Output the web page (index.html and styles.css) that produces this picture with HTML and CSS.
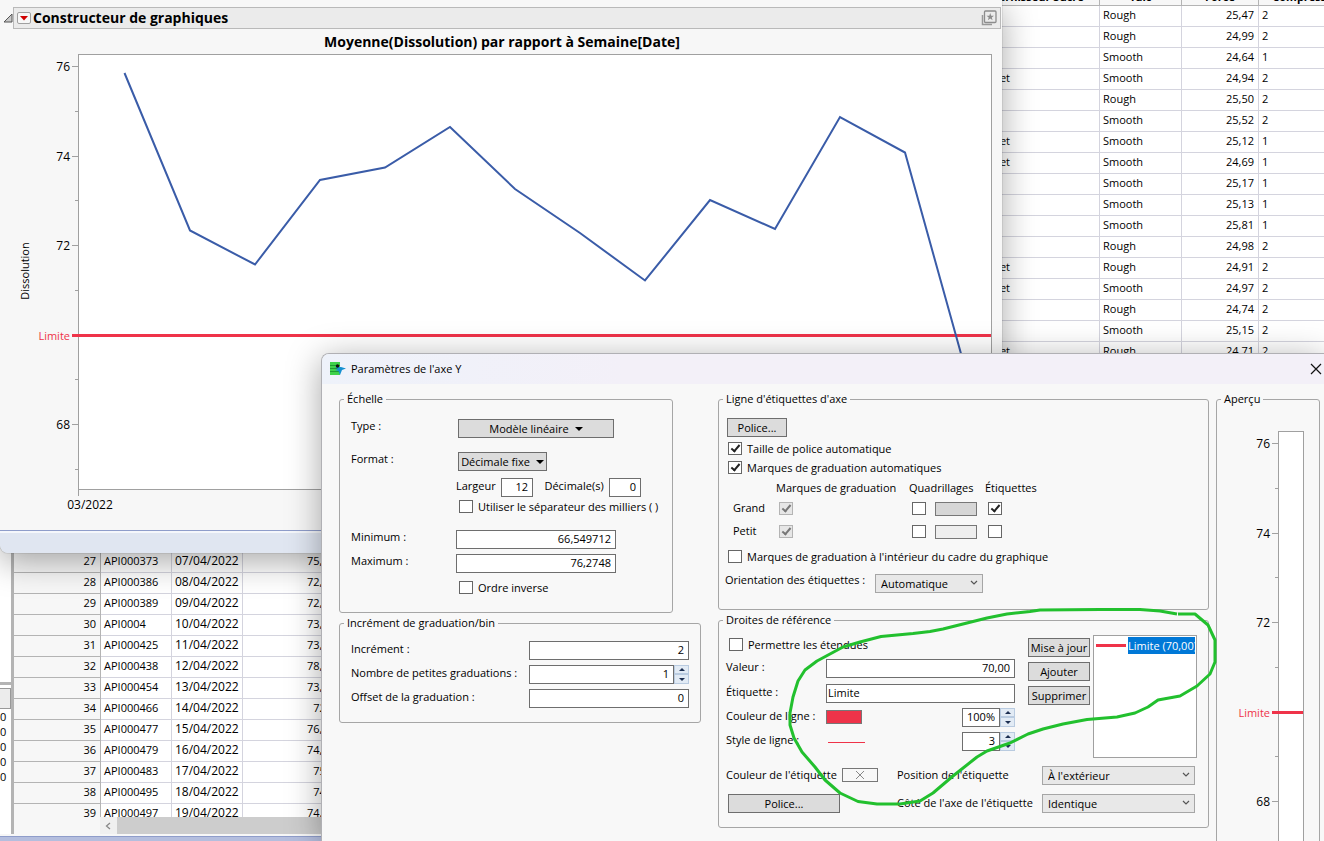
FILE: index.html
```html
<!DOCTYPE html>
<html lang="fr">
<head>
    <meta charset="UTF-8">
    <meta name="viewport" content="width=device-width, initial-scale=1.0">
    <title>Constructeur de graphiques</title>
    <link rel="stylesheet" href="styles.css">
</head>
<body>
    <!-- Table de données en arrière-plan -->
    <main class="data-window">
        <div class="data-main">
            <div class="side">
                <div class="side-top"></div>
                <div class="side-head"></div>
                <div>0</div>
                <div>0</div>
                <div>0</div>
                <div>0</div>
                <div>0</div>
            </div>
            <div class="data-area">
                <div class="data-clip">
                    <table>
                        <colgroup>
                            <col class="c-num"><col class="c-lot"><col class="c-lot"><col class="c-diss"><col class="c-hidden"><col class="c-supplier"><col class="c-size"><col class="c-force"><col>
                        </colgroup>
                        <thead>
                            <tr><th></th><th></th><th></th><th></th><th></th><th>Fournisseur Sucre</th><th>Talc</th><th>Force</th><th class="last">Compression</th></tr>
                        </thead>
                        <tbody>
                            <tr><th></th><td></td><td></td><td></td><td></td><td></td><td>Rough</td><td class="n">25,47</td><td>2</td></tr>
                            <tr><th></th><td></td><td></td><td></td><td></td><td></td><td>Rough</td><td class="n">24,99</td><td>2</td></tr>
                            <tr><th></th><td></td><td></td><td></td><td></td><td></td><td>Smooth</td><td class="n">24,64</td><td>1</td></tr>
                            <tr><th></th><td></td><td></td><td></td><td></td><td>Sweeet</td><td>Smooth</td><td class="n">24,94</td><td>2</td></tr>
                            <tr><th></th><td></td><td></td><td></td><td></td><td></td><td>Rough</td><td class="n">25,50</td><td>2</td></tr>
                            <tr><th></th><td></td><td></td><td></td><td></td><td></td><td>Smooth</td><td class="n">25,52</td><td>2</td></tr>
                            <tr><th></th><td></td><td></td><td></td><td></td><td>Sweeet</td><td>Smooth</td><td class="n">25,12</td><td>1</td></tr>
                            <tr><th></th><td></td><td></td><td></td><td></td><td>Sweeet</td><td>Smooth</td><td class="n">24,69</td><td>1</td></tr>
                            <tr><th></th><td></td><td></td><td></td><td></td><td></td><td>Smooth</td><td class="n">25,17</td><td>1</td></tr>
                            <tr><th></th><td></td><td></td><td></td><td></td><td></td><td>Smooth</td><td class="n">25,13</td><td>1</td></tr>
                            <tr><th></th><td></td><td></td><td></td><td></td><td></td><td>Smooth</td><td class="n">25,81</td><td>1</td></tr>
                            <tr><th></th><td></td><td></td><td></td><td></td><td></td><td>Rough</td><td class="n">24,98</td><td>2</td></tr>
                            <tr><th></th><td></td><td></td><td></td><td></td><td>Sweeet</td><td>Rough</td><td class="n">24,91</td><td>2</td></tr>
                            <tr><th></th><td></td><td></td><td></td><td></td><td>Sweeet</td><td>Smooth</td><td class="n">24,97</td><td>2</td></tr>
                            <tr><th></th><td></td><td></td><td></td><td></td><td></td><td>Rough</td><td class="n">24,74</td><td>2</td></tr>
                            <tr><th></th><td></td><td></td><td></td><td></td><td></td><td>Smooth</td><td class="n">25,15</td><td>2</td></tr>
                            <tr><th></th><td></td><td></td><td></td><td></td><td>Sweeet</td><td>Rough</td><td class="n">24,71</td><td>2</td></tr>
                            <tr><th></th><td></td><td></td><td></td><td></td><td></td><td></td><td></td><td></td></tr>
                            <tr><th></th><td></td><td></td><td></td><td></td><td></td><td></td><td></td><td></td></tr>
                            <tr><th></th><td></td><td></td><td></td><td></td><td></td><td></td><td></td><td></td></tr>
                            <tr><th></th><td></td><td></td><td></td><td></td><td></td><td></td><td></td><td></td></tr>
                            <tr><th></th><td></td><td></td><td></td><td></td><td></td><td></td><td></td><td></td></tr>
                            <tr><th></th><td></td><td></td><td></td><td></td><td></td><td></td><td></td><td></td></tr>
                            <tr><th></th><td></td><td></td><td></td><td></td><td></td><td></td><td></td><td></td></tr>
                            <tr><th></th><td></td><td></td><td></td><td></td><td></td><td></td><td></td><td></td></tr>
                            <tr><th></th><td></td><td></td><td></td><td></td><td></td><td></td><td></td><td></td></tr>
                            <tr><th>27</th><td>API000373</td><td class="date">07/04/2022</td><td class="n">75,21</td><td></td><td></td><td></td><td></td><td></td></tr>
                            <tr><th>28</th><td>API000386</td><td class="date">08/04/2022</td><td class="n">72,93</td><td></td><td></td><td></td><td></td><td></td></tr>
                            <tr><th>29</th><td>API000389</td><td class="date">09/04/2022</td><td class="n">72,42</td><td></td><td></td><td></td><td></td><td></td></tr>
                            <tr><th>30</th><td>API0004</td><td class="date">10/04/2022</td><td class="n">73,75</td><td></td><td></td><td></td><td></td><td></td></tr>
                            <tr><th>31</th><td>API000425</td><td class="date">11/04/2022</td><td class="n">73,41</td><td></td><td></td><td></td><td></td><td></td></tr>
                            <tr><th>32</th><td>API000438</td><td class="date">12/04/2022</td><td class="n">78,14</td><td></td><td></td><td></td><td></td><td></td></tr>
                            <tr><th>33</th><td>API000454</td><td class="date">13/04/2022</td><td class="n">73,46</td><td></td><td></td><td></td><td></td><td></td></tr>
                            <tr><th>34</th><td>API000466</td><td class="date">14/04/2022</td><td class="n">72,5</td><td></td><td></td><td></td><td></td><td></td></tr>
                            <tr><th>35</th><td>API000477</td><td class="date">15/04/2022</td><td class="n">76,62</td><td></td><td></td><td></td><td></td><td></td></tr>
                            <tr><th>36</th><td>API000479</td><td class="date">16/04/2022</td><td class="n">74,63</td><td></td><td></td><td></td><td></td><td></td></tr>
                            <tr><th>37</th><td>API000483</td><td class="date">17/04/2022</td><td class="n">75,1</td><td></td><td></td><td></td><td></td><td></td></tr>
                            <tr><th>38</th><td>API000495</td><td class="date">18/04/2022</td><td class="n">74,3</td><td></td><td></td><td></td><td></td><td></td></tr>
                            <tr><th>39</th><td>API000497</td><td class="date">19/04/2022</td><td class="n">74,03</td><td></td><td></td><td></td><td></td><td></td></tr>
                        </tbody>
                    </table>
                </div>
                <div class="scrollbar">
                    <button type="button" aria-label="Défiler à gauche">
                        <svg width="6" height="8" viewBox="0 0 6 8"><path d="M5 1 L1.5 4 L5 7" fill="none" stroke="#888" stroke-width="1.3"/></svg>
                    </button>
                </div>
            </div>
        </div>
        <div class="data-status"></div>
    </main>

    <!-- Fenêtre du graphique -->
    <section class="graph-window">
        <div class="outline">
            <svg class="disclose" width="10" height="10" viewBox="0 0 10 10"><path d="M9 1 V9 H1 Z" fill="#c8c8c8" stroke="#555" stroke-width="1"/></svg>
            <div class="outline-bar">
                <button type="button" class="red-menu" aria-label="Menu">
                    <svg width="8" height="5" viewBox="0 0 8 5"><path d="M0 0 H8 L4 4.5 Z" fill="#d00000"/></svg>
                </button>
                <h1>Constructeur de graphiques</h1>
                <svg width="16" height="16" viewBox="0 0 16 16">
                    <path d="M1.5 5 V14.5 H11" fill="none" stroke="#999" stroke-width="1.500"/>
                    <rect x="3.5" y="1" width="11.5" height="11.5" rx="1" fill="none" stroke="#8c8c8c" stroke-width="1.3"/>
                    <path d="M9.2 3 L10.2 5.7 L13 5.8 L10.8 7.5 L11.6 10.2 L9.2 8.6 L6.9 10.2 L7.7 7.5 L5.5 5.8 L8.3 5.7 Z" fill="#8c8c8c"/>
                </svg>
            </div>
        </div>
        <svg class="graph" width="1001" height="501" viewBox="0 29 1001 501">
            <text x="502" y="47" class="g-title">Moyenne(Dissolution) par rapport à Semaine[Date]</text>
            <rect x="78.5" y="54.5" width="913" height="435" fill="#fff" stroke="#a0a0a0"/>
            <path d="M72 66.5H78 M72 156.5H78 M72 245.5H78 M72 424.5H78 M75 111.5H78 M75 200.5H78 M75 290.5H78 M75 379.5H78 M75 469.5H78 M78.5 489V496" stroke="#a0a0a0"/>
            <g class="g-axis">
                <text x="70" y="71">76</text>
                <text x="70" y="161">74</text>
                <text x="70" y="250">72</text>
                <text x="70" y="340" class="g-limit">Limite</text>
                <text x="70" y="429">68</text>
            </g>
            <text x="90" y="509" class="g-date">03/2022</text>
            <text transform="translate(29 271) rotate(-90)" class="g-label">Dissolution</text>
            <path d="M72 335.5H991" stroke="#ef3349" stroke-width="3"/>
            <path d="M124.500 73 L190 230.500 L255 264.500 L320 180 L385 167.500 L450 127 L515 189 L580 233 L645 280.500 L710 200 L775 229 L840 117 L905 152.500 L970 386" fill="none" stroke="#3a5ca8" stroke-width="2"/>
        </svg>
        <div class="graph-status"></div>
    </section>

    <!-- Boîte de dialogue -->
    <section class="dialog">
        <header class="dialog-head">
            <svg width="16" height="14" viewBox="0 0 16 14">
                <rect x="0" y="0" width="10" height="13" fill="#3fd24a"/>
                <path d="M0 3.500H10 M0 6.500H10 M0 9.500H10" stroke="#1f9a34"/>
                <path d="M5 5 L11 5 L16 6.500 L12 8 L10 13 L8.500 9 L5 8 L8 7 Z" fill="#1590d0"/>
                <circle cx="7.500" cy="4" r="1.700" fill="#111"/>
            </svg>
            <h2>Paramètres de l'axe Y</h2>
            <button type="button" class="close" aria-label="Fermer">
                <svg width="12" height="12" viewBox="0 0 12 12"><path d="M1 1 L11 11 M11 1 L1 11" stroke="#111" stroke-width="1.200"/></svg>
            </button>
        </header>
        <div class="dialog-body">
            <div class="col-left">
                <fieldset class="scale">
                    <legend>Échelle</legend>
                    <div class="scale-grid">
                        <label for="type">Type :</label>
                        <button type="button" id="type" class="btn menu wide">Modèle linéaire <i></i></button>
                        <label for="format">Format :</label>
                        <button type="button" id="format" class="btn menu">Décimale fixe <i></i></button>
                        <div class="format-row">
                            <label for="largeur">Largeur</label><input type="text" class="tiny" id="largeur" value="12">
                            <label for="decimales">Décimale(s)</label><input type="text" class="tiny" id="decimales" value="0">
                        </div>
                        <label class="check"><input type="checkbox">Utiliser le séparateur des milliers ( )</label>
                        <label for="min">Minimum :</label>
                        <input type="text" id="min" value="66,549712">
                        <label for="max">Maximum :</label>
                        <input type="text" id="max" value="76,2748">
                        <label class="check"><input type="checkbox">Ordre inverse</label>
                    </div>
                </fieldset>
                <fieldset class="step">
                    <legend>Incrément de graduation/bin</legend>
                    <div class="step-grid">
                        <label for="inc">Incrément :</label>
                        <input type="text" id="inc" value="2">
                        <label for="petites">Nombre de petites graduations :</label>
                        <div class="spin">
                            <input type="text" id="petites" value="1">
                            <span><button type="button" class="up" aria-label="Plus"></button><button type="button" class="down" aria-label="Moins"></button></span>
                        </div>
                        <label for="offset">Offset de la graduation :</label>
                        <input type="text" id="offset" value="0">
                    </div>
                </fieldset>
            </div>

            <div class="col-mid">
                <fieldset class="labels">
                    <legend>Ligne d'étiquettes d'axe</legend>
                    <button type="button" class="btn">Police...</button>
                    <label class="check"><input type="checkbox" checked>Taille de police automatique</label>
                    <label class="check"><input type="checkbox" checked>Marques de graduation automatiques</label>
                    <div class="marks">
                        <span></span><span>Marques de graduation</span><span>Quadrillages</span><span>Étiquettes</span>
                        <span>Grand</span>
                        <div><input type="checkbox" checked disabled aria-label="Grand, marques"></div>
                        <div><input type="checkbox" aria-label="Grand, quadrillages"><button type="button" class="swatch grey" aria-label="Couleur"></button></div>
                        <div><input type="checkbox" checked aria-label="Grand, étiquettes"></div>
                        <span>Petit</span>
                        <div><input type="checkbox" checked disabled aria-label="Petit, marques"></div>
                        <div><input type="checkbox" aria-label="Petit, quadrillages"><button type="button" class="swatch light" aria-label="Couleur"></button></div>
                        <div><input type="checkbox" aria-label="Petit, étiquettes"></div>
                    </div>
                    <label class="check"><input type="checkbox">Marques de graduation à l'intérieur du cadre du graphique</label>
                    <div class="orient">
                        <label for="orient">Orientation des étiquettes :</label>
                        <div class="select">
                            <select id="orient"><option>Automatique</option></select>
                            <svg width="8" height="6" viewBox="0 0 8 6"><path d="M1 1 L4 4 L7 1" fill="none" stroke="#555" stroke-width="1.200"/></svg>
                        </div>
                    </div>
                </fieldset>
                <fieldset class="refs">
                    <legend>Droites de référence</legend>
                    <div class="refs-top">
                        <div class="refs-form">
                            <label class="check"><input type="checkbox">Permettre les étendues</label>
                            <label for="valeur">Valeur :</label>
                            <input type="text" id="valeur" value="70,00">
                            <label for="etiquette">Étiquette :</label>
                            <input type="text" id="etiquette" class="left" value="Limite">
                            <label for="couleur">Couleur de ligne :</label>
                            <div class="line-row">
                                <button type="button" id="couleur" class="swatch red"></button>
                                <div class="spin">
                                    <input type="text" value="100%" aria-label="Opacité">
                                    <span><button type="button" class="up" aria-label="Plus"></button><button type="button" class="down" aria-label="Moins"></button></span>
                                </div>
                            </div>
                            <label for="style">Style de ligne :</label>
                            <div class="line-row">
                                <button type="button" id="style" class="line-style"></button>
                                <div class="spin">
                                    <input type="text" value="3" aria-label="Épaisseur">
                                    <span><button type="button" class="up" aria-label="Plus"></button><button type="button" class="down" aria-label="Moins"></button></span>
                                </div>
                            </div>
                        </div>
                        <div class="refs-buttons">
                            <button type="button" class="btn">Mise à jour</button>
                            <button type="button" class="btn">Ajouter</button>
                            <button type="button" class="btn">Supprimer</button>
                        </div>
                        <div class="refs-list">
                            <div class="item"><i></i><span>Limite (70,00)</span></div>
                        </div>
                    </div>
                    <div class="refs-bottom">
                        <div class="label-color">
                            <label for="couleur-etiq">Couleur de l'étiquette</label>
                            <button type="button" id="couleur-etiq" class="swatch none"><svg width="10" height="10" viewBox="0 0 10 10"><path d="M1 1 L9 9 M9 1 L1 9" stroke="#888"/></svg></button>
                        </div>
                        <label for="position">Position de l'étiquette</label>
                        <div class="select">
                            <select id="position"><option>À l'extérieur</option></select>
                            <svg width="8" height="6" viewBox="0 0 8 6"><path d="M1 1 L4 4 L7 1" fill="none" stroke="#555" stroke-width="1.200"/></svg>
                        </div>
                        <button type="button" class="btn">Police...</button>
                        <label for="cote">Côté de l'axe de l'étiquette</label>
                        <div class="select">
                            <select id="cote"><option>Identique</option></select>
                            <svg width="8" height="6" viewBox="0 0 8 6"><path d="M1 1 L4 4 L7 1" fill="none" stroke="#555" stroke-width="1.200"/></svg>
                        </div>
                    </div>
                </fieldset>
            </div>

            <fieldset class="preview">
                <legend>Aperçu</legend>
                <svg width="102" height="434" viewBox="1217 407 102 434">
                    <rect x="1278.500" y="431.500" width="25" height="430" fill="#fff" stroke="#a0a0a0"/>
                    <path d="M1272 443.500H1278 M1272 533.500H1278 M1272 622.500H1278 M1272 801.500H1278 M1275 488.500H1278 M1275 577.500H1278 M1275 667.500H1278 M1275 756.500H1278" stroke="#a0a0a0"/>
                    <path d="M1272 712.500H1303" stroke="#ef3349" stroke-width="3"/>
                    <g class="g-axis">
                        <text x="1270" y="448">76</text>
                        <text x="1270" y="538">74</text>
                        <text x="1270" y="627">72</text>
                        <text x="1270" y="717" class="g-limit">Limite</text>
                        <text x="1270" y="806">68</text>
                    </g>
                </svg>
            </fieldset>
        </div>

        <!-- Annotation à main levée -->
        <svg class="scribble" width="1002" height="487" viewBox="322 354 1002 487">
            <path d="M1177 614 L1160 611 L1140 609.500 L1100 609.500 L1040 610 L1030 611.500 L1007 614 L987 618 L967 623 L943 629 L930 631.500 L913 633.500 L881 636.500 L860 642 L843 647 L817 661 L805 670 L798 681 L793 697 L790 713 L790 725 L794 738 L802 752 L815 767 L825 780 L840 793 L858 801.500 L877 804 L900 804 L920 801 L933 793 L953 776 L977 757 L987 751 L1010 743 L1028 734 L1043 729 L1063 724 L1087 719.500 L1117 717 L1135 713 L1148 707 L1158 700 L1180 696 L1197 686 L1210 674 L1215 662 L1215 640 L1208 625 L1195 614 L1178 614"/>
        </svg>
    </section>
</body>
</html>
```
FILE: styles.css
```css
body {
    margin: 0;
    height: 100vh;
    position: relative;
    overflow: hidden;
    background-color: #f7f7f7;
    font-family: "Open Sans", "Noto Sans", sans-serif;
    font-size: 11px;
    line-height: 14px;
    color: #000;
}

button, input, select {
    font: inherit;
    color: inherit;
    margin: 0;
    box-sizing: border-box;
    border-radius: 0;
}

svg {
    display: block;
}

/* Table de données */
.data-window {
    height: 100%;
    display: flex;
    flex-direction: column;
}

.data-main {
    flex: 1;
    min-height: 0;
    display: flex;
}

.side {
    width: 11px;
    background-color: #fff;
    border-right: 3px solid #b4b4b4;
    line-height: 15px;
    overflow: hidden;
}

.side-top {
    height: 682px;
    border-bottom: 3px solid #b4b4b4;
    background-color: #fff;
}

.side-head {
    height: 19px;
    margin: 3px 0 0;
    border: 1px solid #999;
    border-left: 0;
    background-color: #ececec;
}

.data-area {
    flex: 1;
    min-width: 0;
    display: flex;
    flex-direction: column;
}

.data-clip {
    flex: 1;
    min-height: 0;
    overflow: hidden;
}

table {
    width: calc(100% + 34px);
    margin-top: -16px;
    table-layout: fixed;
    border-collapse: separate;
    border-spacing: 0;
    background-color: #fff;
}

.c-num { width: 87px; }
.c-lot { width: 71px; }
.c-diss { width: 97px; }
.c-hidden { width: 630px; }
.c-supplier { width: 130px; }
.c-size { width: 82px; }
.c-force { width: 77px; }

th, td {
    box-sizing: border-box;
    height: 21px;
    padding: 0 3px 2px;
    border-right: 1px solid #d4d4de;
    border-bottom: 1px solid #d4d4de;
    text-align: left;
    font-weight: normal;
    white-space: nowrap;
}

thead th {
    height: 22px;
    padding: 4px 3px 0;
    background-color: #f7f7f7;
    border-color: #b4b4b4;
    font-weight: bold;
    text-align: center;
}

tbody th {
    background-color: #f7f7f7;
    border-color: #b4b4b4;
    text-align: right;
    padding-right: 4px;
}

.n {
    text-align: right;
    padding-right: 4px;
}

.date {
    font-size: 12px;
}

.scrollbar {
    height: 17px;
    margin-left: 86px;
    background-color: #cdcdcd;
}

.scrollbar button {
    width: 17px;
    height: 17px;
    padding: 0 5px;
    border: 0;
    background-color: #f0f0f0;
}

.data-status {
    height: 4px;
    margin-top: 2px;
    border-top: 1px solid #8f9dca;
    background-color: #b4bede;
}

/* Fenêtre du graphique */
.graph-window {
    position: absolute;
    left: 0;
    top: 0;
    width: 1002px;
    background-color: #f7f7f7;
    border-radius: 0 0 8px 8px;
    box-shadow: 0 8px 34px rgba(0, 0, 0, 0.35), 0 0 1px #555;
    overflow: hidden;
}

.outline {
    display: flex;
    align-items: center;
    padding: 7px 1px 0 3px;
}

.outline-bar {
    flex: 1;
    display: flex;
    align-items: center;
    height: 20px;
    padding: 0 3px;
    border: 1px solid #b9b9b9;
    background-color: #ebebeb;
}

.red-menu {
    width: 14px;
    height: 12px;
    padding: 0 2px;
    border: 1px solid #a0a0a0;
    border-radius: 2px;
    background-color: #f7f7f7;
}

h1 {
    flex: 1;
    margin: 0 0 0 2px;
    font-size: 14px;
    font-weight: bold;
}

.g-title {
    font-size: 14px;
    font-weight: bold;
    text-anchor: middle;
}

.g-axis {
    font-size: 12px;
    text-anchor: end;
}

.g-date,
.g-label {
    font-size: 12px;
    text-anchor: middle;
}

.g-label {
    font-size: 11px;
}

.g-limit {
    font-size: 11px;
    fill: #ef3349;
}

.graph-status {
    height: 20px;
    border-top: 1px solid #8f9dca;
    box-shadow: inset 0 2px #f5f7fb;
    background-color: #e0e6f1;
    padding-bottom: 2px;
}

/* Boîte de dialogue */
.dialog {
    position: absolute;
    left: 321px;
    right: 0;
    top: 353px;
    bottom: 0;
    display: flex;
    flex-direction: column;
    border: 1px solid #b0b0b4;
    border-width: 1px 0 0 1px;
    border-radius: 8px 0 0 0;
    background-color: #f8f8f8;
    box-shadow: 0 6px 34px rgba(0, 0, 0, 0.35);
}

.dialog-head {
    flex: none;
    display: flex;
    align-items: center;
    height: 30px;
    padding: 0 2px 0 8px;
    border-radius: 7px 0 0 0;
    background: linear-gradient(to right, #eef2fa, #f3f0f8 30%);
}

h2 {
    flex: 1;
    margin: 0 0 0 5px;
    font-size: 11px;
    font-weight: normal;
}

.close {
    padding: 0;
    border: 0;
    background: none;
}

.dialog-body {
    flex: 1;
    min-height: 0;
    display: flex;
    padding: 7px 4px 0 17px;
    overflow: hidden;
}

.col-left {
    width: 379px;
}

.col-mid {
    flex: 1;
    margin-right: 7px;
}

fieldset {
    box-sizing: border-box;
    min-width: 0;
    margin: 0 0 2px;
    padding: 0;
    border: 1px solid #a6a6a6;
    border-radius: 3px;
}

legend {
    margin-left: 4px;
    padding: 0 3px;
    line-height: 16px;
}

input[type="text"] {
    display: block;
    width: 100%;
    height: 19px;
    padding: 0 4px 3px;
    border: 1px solid #6e6e6e;
    background-color: #fff;
    text-align: right;
}

input[type="text"].left {
    padding-left: 1px;
    text-align: left;
}

input[type="checkbox"] {
    appearance: none;
    flex: none;
    position: relative;
    width: 14px;
    height: 13px;
    border: 1px solid #666;
    background-color: #fff;
}

input[type="checkbox"]:checked::after {
    content: "";
    position: absolute;
    left: 4px;
    top: 0;
    width: 3px;
    height: 7px;
    border: solid #222;
    border-width: 0 2px 2px 0;
    transform: rotate(40deg);
}

input[type="checkbox"]:disabled {
    border-color: #b4b4b4;
    background-color: #e6e6e6;
}

input[type="checkbox"]:disabled::after {
    border-color: #777;
}

.check {
    display: flex;
    align-items: center;
    gap: 5px;
    height: 13px;
    white-space: nowrap;
}

.btn {
    height: 19px;
    padding: 0;
    border: 1px solid #6e6e6e;
    background-color: #dcdcdc;
    line-height: 17px;
    white-space: nowrap;
}

.menu {
    display: flex;
    justify-content: center;
    align-items: center;
    gap: 6px;
    width: 89px;
    margin-left: 2px;
}

.menu.wide {
    width: 156px;
}

.menu i {
    border: 4px solid transparent;
    border-top: 4px solid #000;
    border-bottom: 0;
}

.select {
    position: relative;
    height: 19px;
}

.select select {
    appearance: none;
    display: block;
    width: 100%;
    height: 19px;
    padding: 0 5px;
    border: 1px solid #a6a6a6;
    background-color: #e8e8e8;
}

.select svg {
    position: absolute;
    right: 5px;
    top: 6px;
    pointer-events: none;
}

.swatch {
    height: 14px;
    padding: 0;
    border: 1px solid #777;
}

.grey,
.light {
    width: 42px;
    margin-left: 9px;
    background-color: #d6d6d6;
}

.light {
    background-color: #eee;
}

.red {
    width: 36px;
    margin-top: 2px;
    background-color: #ef3349;
}

.none {
    display: flex;
    align-items: center;
    justify-content: center;
    width: 36px;
    background-color: #f8f8f8;
}

.line-style {
    width: 37px;
    height: 11px;
    margin-left: 2px;
    padding: 0;
    border: 0;
    border-bottom: 1px solid #ef3349;
    background: none;
}

.spin {
    display: flex;
}

.spin input[type="text"] {
    flex: 1;
    min-width: 0;
}

.spin span {
    display: flex;
    flex-direction: column;
    width: 15px;
}

.up,
.down {
    display: flex;
    align-items: center;
    justify-content: center;
    height: 9px;
    padding: 0;
    border: 1px solid #b9cbe0;
    background-color: #e2ebf5;
}

.down {
    height: 10px;
}

.up::after,
.down::after {
    content: "";
    border: 3px solid transparent;
    border-top: 0;
    border-bottom: 3px solid #1c2f52;
}

.down::after {
    border-bottom: 0;
    border-top: 3px solid #1c2f52;
}

/* Échelle */
.scale {
    width: 334px;
    height: 222px;
}

.scale-grid {
    display: grid;
    grid-template-columns: 105px 160px;
    grid-template-rows: 33px 26px 22px 30px 24px 27px 14px;
    align-items: start;
    padding: 12px 0 0 11px;
}

.scale-grid .check,
.format-row {
    grid-column: 2;
}

.scale-grid .check {
    margin-left: 3px;
}

.format-row {
    display: flex;
    justify-content: space-between;
    width: 185px;
}

.format-row label {
    padding-top: 1px;
}

.format-row label + input + label {
    margin-left: 6px;
}

input[type="text"].tiny {
    width: 32px;
}

/* Incrément */
.step {
    width: 362px;
    height: 108px;
}

.step-grid {
    display: grid;
    grid-template-columns: 178px 160px;
    grid-auto-rows: 24px;
    align-items: start;
    padding: 10px 0 0 11px;
}

.step-grid label,
.refs-form label {
    padding-top: 1px;
}

/* Étiquettes d'axe */
.labels {
    height: 219px;
}

.labels > .btn {
    display: block;
    width: 60px;
    margin: 11px 0 5px 8px;
}

.labels > .check {
    margin: 0 0 6px 9px;
}

.marks {
    display: grid;
    grid-template-columns: 43px 133px 76px 1fr;
    grid-template-rows: 20px 23px 23px;
    margin: 7px 0 3px 14px;
}

.marks div {
    display: flex;
    align-items: flex-start;
    padding: 1px 0 0 3px;
}

.orient {
    display: flex;
    margin: 11px 0 0 6px;
}

.orient label {
    width: 150px;
    line-height: 12px;
}

.orient .select {
    width: 108px;
}

/* Droites de référence */
.refs {
    height: 216px;
}

.refs-top {
    display: flex;
    align-items: flex-start;
    padding: 7px 0 0 7px;
}

.refs-form {
    display: grid;
    grid-template-columns: 100px 189px;
    grid-template-rows: 21px 25px 24px 24px 19px;
    align-items: start;
    margin-top: 3px;
}

.refs-form .check {
    grid-column: 1 / 3;
    margin-left: 3px;
    padding-top: 0;
}

.line-row {
    display: flex;
    align-items: flex-start;
    justify-content: space-between;
}

.line-row .spin {
    width: 53px;
}

.refs-buttons {
    display: flex;
    flex-direction: column;
    gap: 5px;
    width: 62px;
    margin: 3px 3px 0 13px;
}

.refs-list {
    box-sizing: border-box;
    width: 104px;
    height: 123px;
    padding: 1px;
    border: 1px solid #a0a0a0;
    background-color: #fff;
}

.item {
    display: flex;
    align-items: center;
    gap: 2px;
    padding-left: 1px;
    overflow: hidden;
}

.item i {
    flex: none;
    width: 30px;
    height: 3px;
    background-color: #ef3349;
}

.item span {
    flex: 1;
    overflow: hidden;
    background-color: #0078d7;
    color: #fff;
    line-height: 17px;
    white-space: nowrap;
}

.refs-bottom {
    display: grid;
    grid-template-columns: 171px 145px 153px;
    row-gap: 9px;
    padding: 8px 0 0 7px;
}

.refs-bottom > label,
.label-color {
    padding-top: 2px;
    white-space: nowrap;
}

.label-color {
    display: flex;
    justify-content: space-between;
    width: 152px;
}

.refs-bottom .btn {
    width: 112px;
    margin-left: 2px;
}

/* Aperçu */
.preview {
    width: 104px;
    height: 470px;
}

.scribble {
    position: absolute;
    left: 0;
    top: 0;
    fill: none;
    stroke: #22c02e;
    stroke-width: 3px;
    stroke-linejoin: round;
    pointer-events: none;
}
```
